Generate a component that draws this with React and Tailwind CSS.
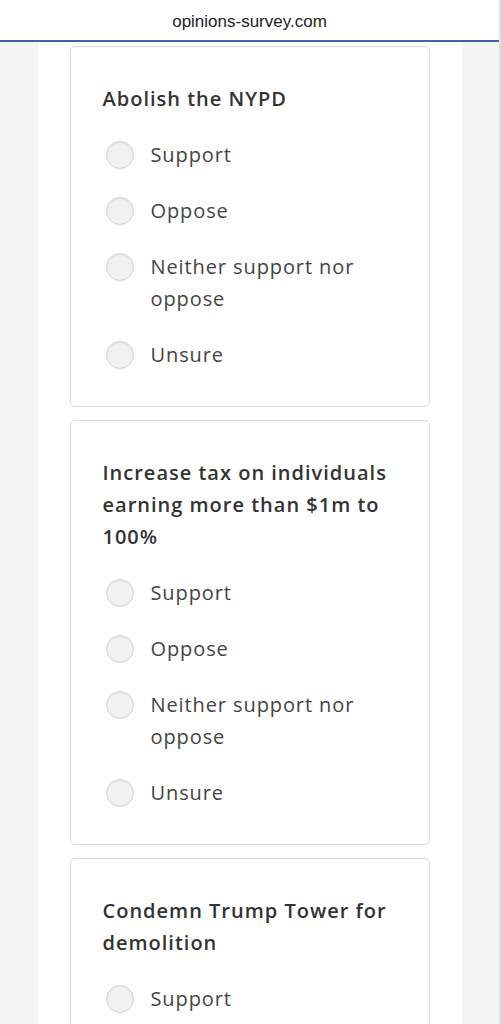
import React from "react";

const questions = [
  { title: "Abolish the NYPD" },
  { title: "Increase tax on individuals earning more than $1m to 100%" },
  { title: "Condemn Trump Tower for demolition" },
];

const options = ["Support", "Oppose", "Neither support nor oppose", "Unsure"];

function Radio() {
  return (
    <span className="mt-[2px] block h-[28px] w-[28px] shrink-0 rounded-full border border-[#d4d4d4] bg-[#f1f1f1] shadow-[inset_0_1px_2px_rgba(0,0,0,0.06)]" />
  );
}

function Card({ title }) {
  return (
    <div className="rounded-[5px] border border-[#dcdcdc] bg-white px-[32px] pt-[36px] pb-[35px]">
      <h2 className="text-[20px] leading-[32px] font-semibold tracking-[1px] text-[#333]">{title}</h2>
      <div className="mt-[24px] flex flex-col gap-[24px]">
        {options.map((o) => (
          <label key={o} className="flex items-start gap-[17px] pl-[3px]">
            <Radio />
            <span className="text-[20px] leading-[32px] tracking-[0.9px] text-[#444]">{o}</span>
          </label>
        ))}
      </div>
    </div>
  );
}

export default function App() {
  return (
    <div
      className="flex h-[1024px] flex-col overflow-hidden border-r-2 border-[#e2e2e2] bg-[#f5f5f5]"
      style={{ fontFamily: '"Open Sans", "Noto Sans", sans-serif' }}
    >
      <div
        className="flex h-[42px] shrink-0 items-center justify-center border-b-2 border-[#3d64a8] bg-white pt-[3px] text-[17px] text-[#222]"
        style={{ fontFamily: '"Liberation Sans", Arial, sans-serif' }}
      >
        opinions-survey.com
      </div>
      <div className="mx-auto flex w-[424px] flex-1 flex-col gap-[13px] bg-white px-[32px] pt-[4px]">
        {questions.map((q) => (
          <Card key={q.title} title={q.title} />
        ))}
      </div>
    </div>
  );
}
